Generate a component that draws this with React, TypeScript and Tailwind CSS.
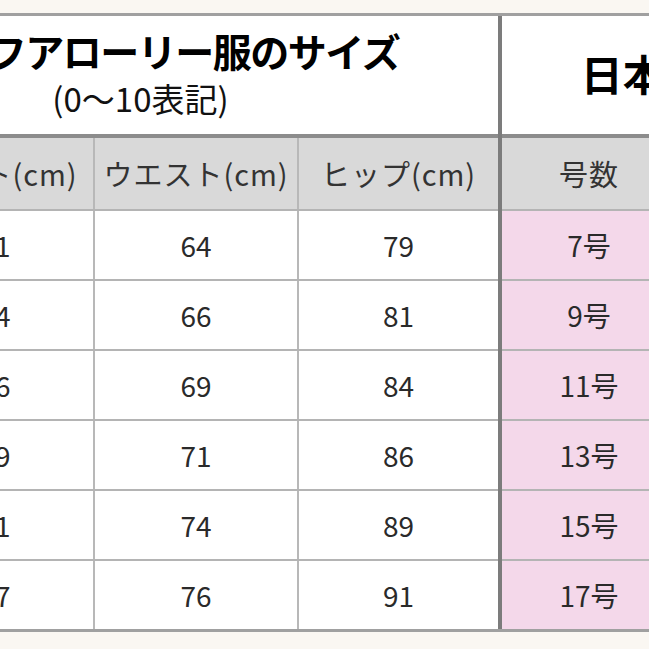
const rows = [
  { bust: "81", waist: "64", hip: "79", size: "7号" },
  { bust: "84", waist: "66", hip: "81", size: "9号" },
  { bust: "86", waist: "69", hip: "84", size: "11号" },
  { bust: "89", waist: "71", hip: "86", size: "13号" },
  { bust: "91", waist: "74", hip: "89", size: "15号" },
  { bust: "97", waist: "76", hip: "91", size: "17号" },
];

const font = { fontFamily: '"Noto Sans CJK JP", "Noto Sans", sans-serif' };

export default function App() {
  return (
    <div className="w-[649px] h-[649px] overflow-hidden bg-[#faf7f2] pt-[13px]" style={font}>
      <div className="flex w-max ml-[-111px] border-t-[3px] border-b-[3px] border-[#a0a0a0] bg-white">
        {/* left: size table */}
        <div className="w-[609px] flex flex-col">
          <div className="h-[122px] border-b-4 border-[#8c8c8c] flex flex-col items-center justify-center text-black">
            <div className="text-[39px] font-bold leading-none tracking-[-1.5px] whitespace-nowrap mt-[-4px]">
              フアローリー服のサイズ
            </div>
            <div className="text-[33px] leading-none mt-[12px] mr-[106px] text-[#111]">(0〜10表記)</div>
          </div>
          <div className="flex h-[73px] bg-[#d9d9d9] border-b-2 border-[#b4b4b4] text-[29px] tracking-[1px] text-[#333]">
            <div className="w-[206px] border-r-2 border-[#b8b8b8] flex items-center justify-center pl-[18px]">バスト(cm)</div>
            <div className="w-[204px] border-r-2 border-[#b8b8b8] flex items-center justify-center">ウエスト(cm)</div>
            <div className="w-[199px] flex items-center justify-center">ヒップ(cm)</div>
          </div>
          {rows.map((r, i) => (
            <div
              key={r.size}
              className={`flex text-[28px] text-[#2a2a2a] ${i < rows.length - 1 ? "h-[70px] border-b-2 border-[#b4b4b4]" : "h-[68px]"}`}
            >
              <div className="w-[206px] border-r-2 border-[#b8b8b8] flex items-center justify-center pl-[8px]">{r.bust}</div>
              <div className="w-[204px] border-r-2 border-[#b8b8b8] flex items-center justify-center">{r.waist}</div>
              <div className="w-[199px] flex items-center justify-center">{r.hip}</div>
            </div>
          ))}
        </div>

        {/* right: japanese sizes */}
        <div className="w-[358px] flex flex-col border-l-4 border-[#7c7c7c]">
          <div className="h-[122px] border-b-4 border-[#8c8c8c] flex items-center justify-center">
            <span className="text-[42px] font-bold leading-none text-black mt-[-4px] ml-[12px]">日本サイズ</span>
          </div>
          <div className="flex h-[73px] bg-[#d9d9d9] border-b-2 border-[#b4b4b4] text-[29px] tracking-[1px] text-[#333]">
            <div className="w-[176px] border-r-2 border-[#b8b8b8] flex items-center justify-center">号数</div>
            <div className="flex-1 flex items-center justify-center">サイズ</div>
          </div>
          {rows.map((r, i) => (
            <div
              key={r.size}
              className={`flex bg-[#f4d8ea] text-[28px] text-[#2a2a2a] ${i < rows.length - 1 ? "h-[70px] border-b-2 border-[#b4b4b4]" : "h-[68px]"}`}
            >
              <div className="w-[176px] border-r-2 border-[#b8b8b8] flex items-center justify-center">{r.size}</div>
              <div className="flex-1 flex items-center justify-center">S</div>
            </div>
          ))}
        </div>
      </div>
    </div>
  );
}
